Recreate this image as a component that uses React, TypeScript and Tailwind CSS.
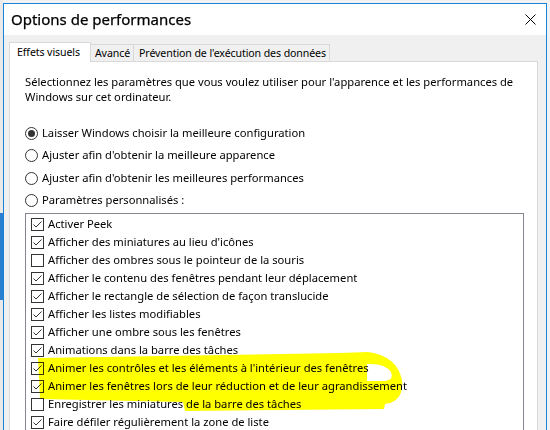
import React from 'react';

const items: { label: string; checked: boolean }[] = [
  { label: 'Activer Peek', checked: true },
  { label: "Afficher des miniatures au lieu d'icônes", checked: true },
  { label: 'Afficher des ombres sous le pointeur de la souris', checked: false },
  { label: 'Afficher le contenu des fenêtres pendant leur déplacement', checked: true },
  { label: 'Afficher le rectangle de sélection de façon translucide', checked: true },
  { label: 'Afficher les listes modifiables', checked: true },
  { label: 'Afficher une ombre sous les fenêtres', checked: true },
  { label: 'Animations dans la barre des tâches', checked: true },
  { label: "Animer les contrôles et les éléments à l'intérieur des fenêtres", checked: true },
  { label: 'Animer les fenêtres lors de leur réduction et de leur agrandissement', checked: true },
  { label: 'Enregistrer les miniatures de la barre des tâches', checked: false },
  { label: 'Faire défiler régulièrement la zone de liste', checked: true },
];

const radios = [
  { label: 'Laisser Windows choisir la meilleure configuration', selected: true },
  { label: "Ajuster afin d'obtenir la meilleure apparence", selected: false },
  { label: "Ajuster afin d'obtenir les meilleures performances", selected: false },
  { label: 'Paramètres personnalisés :', selected: false },
];

const Radio = ({ selected }: { selected: boolean }) => (
  <span className="w-[13px] h-[13px] rounded-full border border-[#333333] bg-white flex items-center justify-center shrink-0">
    {selected && <span className="w-[7px] h-[7px] rounded-full bg-[#333333]" />}
  </span>
);

const Checkbox = ({ checked }: { checked: boolean }) => (
  <span className="w-[13px] h-[13px] border border-[#333333] bg-white shrink-0 flex">
    {checked && (
      <svg width="11" height="11" viewBox="0 0 11 11">
        <polyline points="1.5,5.5 4,8 9.5,2.5" fill="none" stroke="#333333" strokeWidth="1" />
      </svg>
    )}
  </span>
);

export default function App() {
  return (
    <div className="relative w-[550px] h-[430px] overflow-hidden bg-[#f2f2f2] flex font-['Segoe_UI','Noto_Sans',sans-serif] text-black">
      <div className="w-[3px] flex flex-col shrink-0">
        <div className="h-[213px] bg-[#e9e9e9]" />
        <div className="h-[87px] bg-[#2a7fd0]" />
        <div className="flex-1 bg-[#e9e9e9]" />
      </div>
      <div className="pt-[3px] flex flex-col">
        <div className="w-[544px] h-[440px] border border-[#1883d7] bg-[#f0f0f0] flex flex-col">
          {/* title bar */}
          <div className="h-[31px] bg-white flex items-center justify-between pl-[7px] pr-[10px] shrink-0">
            <span className="text-[15px] leading-none [-webkit-text-stroke:0.25px_black]">Options de performances</span>
            <svg width="11" height="11" viewBox="0 0 11 11">
              <path d="M0.5 0.5 L10.5 10.5 M10.5 0.5 L0.5 10.5" stroke="#000" strokeWidth="1" />
            </svg>
          </div>
          {/* body */}
          <div className="pt-[7px] pl-[5px] flex flex-col">
            <div className="flex items-end text-[10.6px] tracking-[-0.1px] leading-none relative z-10">
              <div className="h-[20px] -mb-px bg-white border border-b-0 border-[#d9d9d9] pl-[7px] pr-[10px] flex items-center">
                Effets visuels
              </div>
              <div className="h-[17px] -ml-px bg-[#f0f0f0] border border-b-0 border-[#d9d9d9] pl-[4px] pr-[3px] flex items-center">
                Avancé
              </div>
              <div className="h-[17px] -ml-px bg-[#f0f0f0] border border-b-0 border-[#d9d9d9] pl-[5px] pr-[3px] flex items-center">
                Prévention de l'exécution des données
              </div>
            </div>
            <div className="w-[529px] h-[380px] bg-white border border-[#d9d9d9] pl-[15px] pt-[12px] text-[11.2px]">
              <p className="leading-[15px] whitespace-nowrap">
                Sélectionnez les paramètres que vous voulez utiliser pour l'apparence et les performances de
                <br />
                Windows sur cet ordinateur.
              </p>
              <div className="mt-[18px] flex flex-col">
                {radios.map((r) => (
                  <div key={r.label} className="h-[22.5px] flex items-center gap-[4px]">
                    <Radio selected={r.selected} />
                    <span>{r.label}</span>
                  </div>
                ))}
              </div>
              <div className="mt-[1px] w-[499px] h-[240px] border border-[#828790] pt-[1.5px] pl-[5px]">
                {items.map((it) => (
                  <div key={it.label} className="h-[18px] flex items-center gap-[4px]">
                    <Checkbox checked={it.checked} />
                    <span>{it.label}</span>
                  </div>
                ))}
              </div>
            </div>
          </div>
        </div>
      </div>
      <svg className="absolute left-0 top-0 pointer-events-none mix-blend-multiply" width="550" height="430" viewBox="0 0 550 430">
        <path
          fillRule="evenodd"
          fill="#ffff00"
          d="M38 358 L340 353 L368 352 Q397 356 402 380 Q404 398 390 403 L385 404 L384 409 L185 411 L183 402 L40 399 Z M367 364 Q385 363 391 372 Q394 380 385 381 L367 381 Z"
        />
      </svg>
    </div>
  );
}
